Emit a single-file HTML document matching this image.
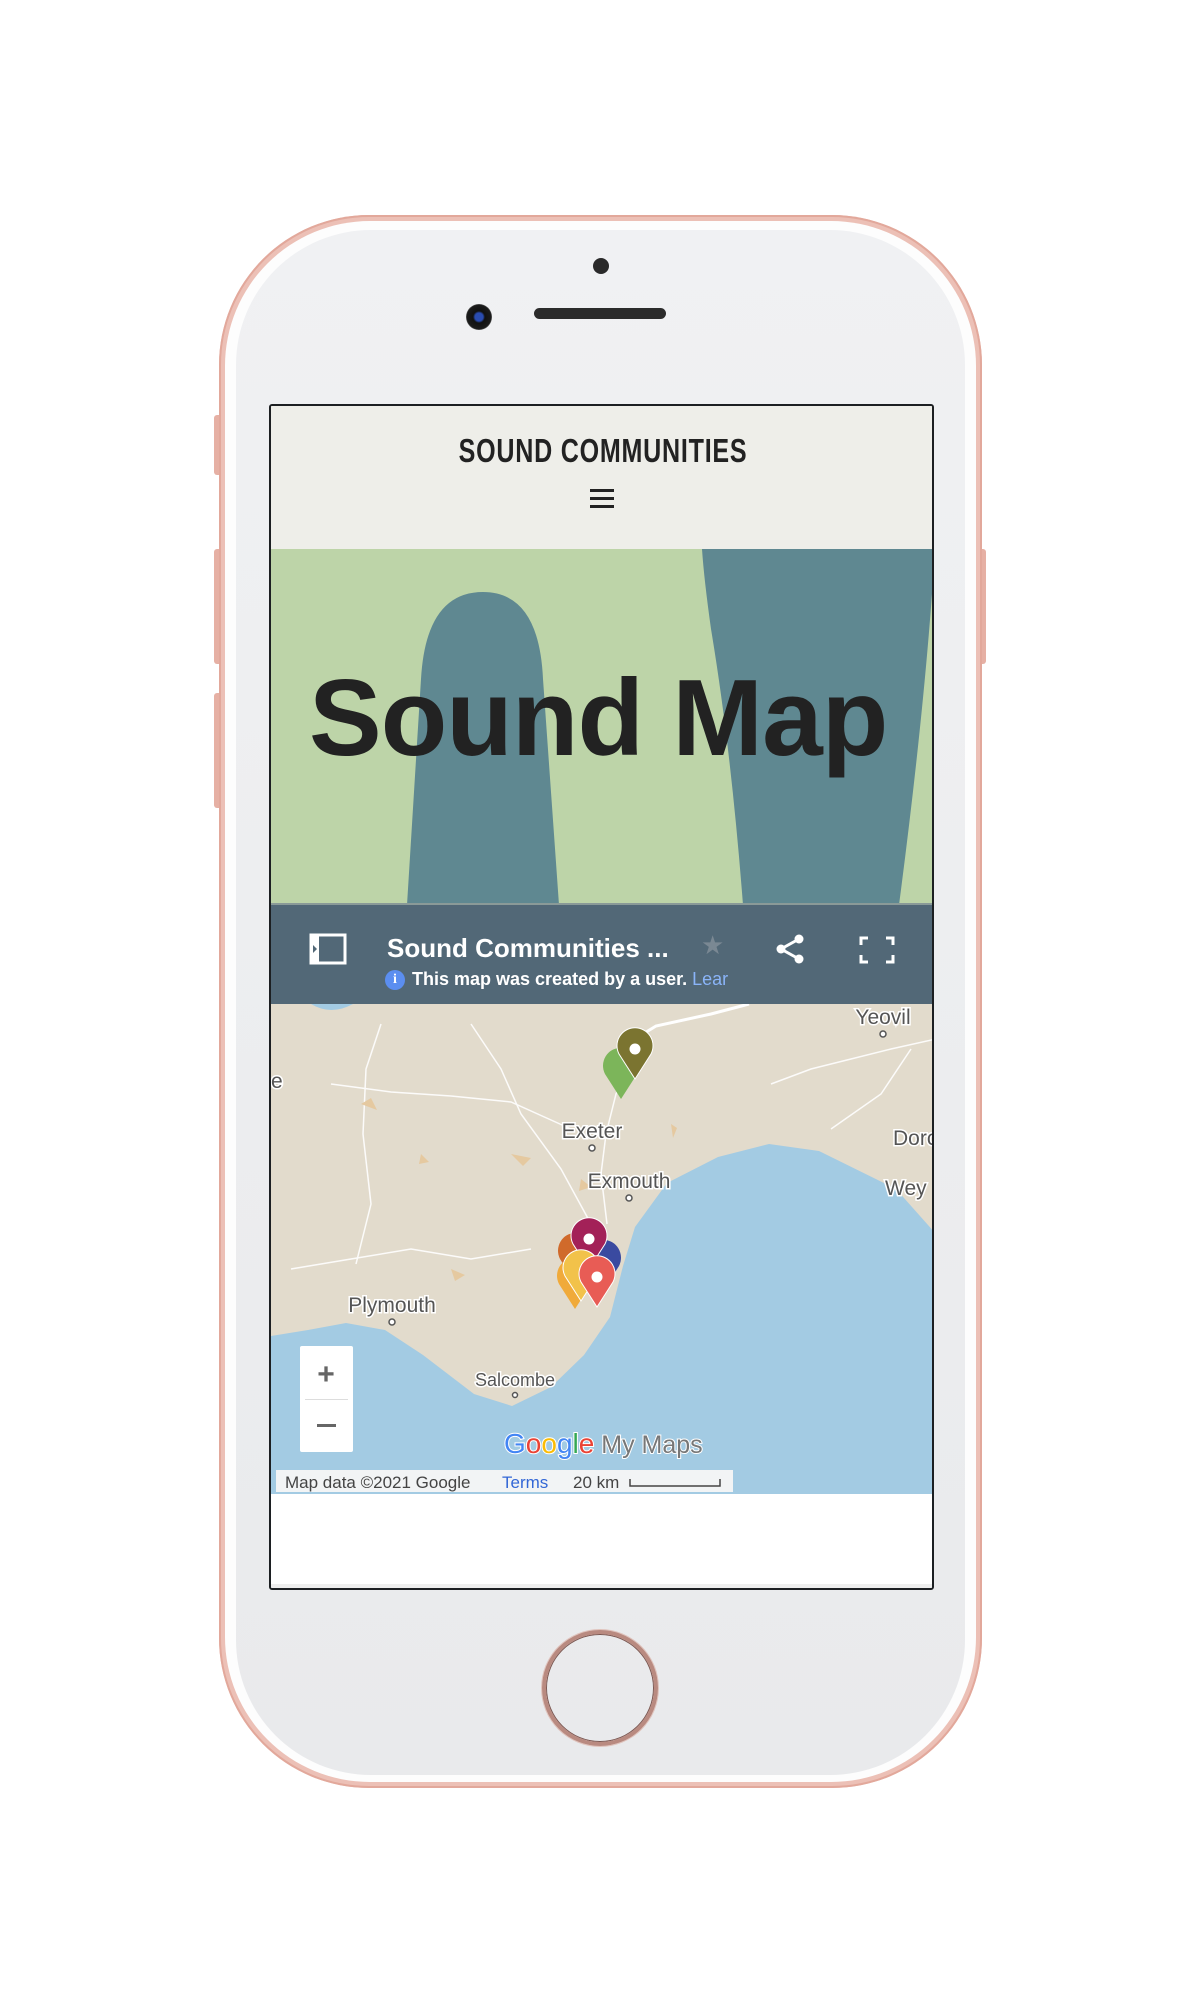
<!DOCTYPE html>
<html><head><meta charset="utf-8"><style>
*{margin:0;padding:0;box-sizing:border-box}
body{width:1200px;height:2000px;background:#fff;position:relative;overflow:hidden;font-family:"Liberation Sans",sans-serif}
.abs{position:absolute}
.phone{left:219px;top:215px;width:763px;height:1573px;border-radius:150px;background:#ecc0b6;box-shadow:inset 0 0 0 2px #e2a89b}
.phone2{left:225px;top:221px;width:751px;height:1561px;border-radius:145px;background:#fdfdfd}
.face{left:236px;top:230px;width:729px;height:1545px;border-radius:135px;background:linear-gradient(#f0f1f3,#e9eaec)}
.btn{background:#e6b0a4;border-radius:3px;width:8px}
.screen{left:269px;top:404px;width:665px;height:1186px;border:2px solid #1c1f22;background:#fff;overflow:hidden;border-radius:3px}
</style></head><body>
<div class="abs btn" style="left:214px;top:415px;height:60px"></div>
<div class="abs btn" style="left:214px;top:549px;height:115px"></div>
<div class="abs btn" style="left:214px;top:693px;height:115px"></div>
<div class="abs btn" style="left:978px;top:549px;height:115px"></div>
<div class="abs phone"></div>
<div class="abs phone2"></div>
<div class="abs face"></div>
<div class="abs" style="left:593px;top:258px;width:16px;height:16px;border-radius:50%;background:#2a2a2a"></div>
<div class="abs" style="left:466px;top:304px;width:26px;height:26px;border-radius:50%;background:radial-gradient(circle at 50% 50%,#2a4cb0 0 4px,#111 6px,#1b1b1b 12px,#666 13px)"></div>
<div class="abs" style="left:534px;top:308px;width:132px;height:11px;border-radius:6px;background:#2b2b2b"></div>
<div class="abs" style="left:542px;top:1630px;width:116px;height:116px;border-radius:50%;border:4px solid #b98a80;box-shadow:inset 0 0 0 1px #7a5650,0 0 0 1px #e0c3bc"></div>

<div class="abs screen">
 <div class="abs" style="left:0;top:0;width:665px;height:143px;background:#eeeee9"></div>
 <div class="abs" style="left:0;top:26px;width:663px;text-align:center;font-weight:bold;font-size:33px;letter-spacing:1px;color:#222"><span style="display:inline-block;transform:scaleX(0.76)">SOUND COMMUNITIES</span></div>
 <div class="abs" style="left:319px;top:83px;width:24px;height:3px;background:#222;box-shadow:0 8px 0 #222,0 16px 0 #222"></div>
 <svg class="abs" style="left:0;top:143px" width="665" height="356" viewBox="0 0 665 356">
  <rect width="665" height="356" fill="#bdd4a8"/>
  <path d="M136 356 L150 130 Q155 43 212 43 Q268 43 272 130 L288 356 Z" fill="#5f8891"/>
  <path d="M431 0 L664 0 Q655 150 628 356 L472 356 Q460 200 440 80 Q433 30 431 0 Z" fill="#5f8891"/>
  <rect y="354" width="665" height="2" fill="#8a9a98"/>
 </svg>
 <div class="abs" style="left:38px;top:258px;font-size:109px;font-weight:bold;color:#222;letter-spacing:-1px;line-height:1">Sound Map</div>
 <div class="abs" style="left:0;top:499px;width:665px;height:99px;background:#526877"></div>
 <svg class="abs" style="left:38px;top:527px" width="38" height="32" viewBox="0 0 38 32"><rect x="2" y="2" width="34" height="28" fill="none" stroke="#fff" stroke-width="3"/><rect x="2" y="2" width="8" height="28" fill="#fff"/><path d="M4 12 L8 16 L4 20Z" fill="#526877"/></svg>
 <div class="abs" style="left:116px;top:527px;color:#fff;font-weight:bold;font-size:26px">Sound Communities ...</div>
 <div class="abs" style="left:430px;top:524px;color:#7a8893;font-size:26px">★</div>
 <svg class="abs" style="left:504px;top:528px" width="30" height="30" viewBox="0 0 30 30"><circle cx="24" cy="5" r="4.5" fill="#fff"/><circle cx="6" cy="15" r="4.5" fill="#fff"/><circle cx="24" cy="25" r="4.5" fill="#fff"/><path d="M24 5 L6 15 L24 25" stroke="#fff" stroke-width="3" fill="none"/></svg>
 <svg class="abs" style="left:588px;top:530px" width="36" height="28" viewBox="0 0 36 28"><path d="M2 9V2H9M27 2H34V9M34 19V26H27M9 26H2V19" stroke="#fff" stroke-width="3" fill="none"/></svg>
 <div class="abs" style="left:114px;top:564px;width:20px;height:20px;border-radius:50%;background:#5b8ef0;color:#fff;font-size:14px;font-weight:bold;text-align:center;line-height:20px;font-family:'Liberation Serif',serif">i</div>
 <div class="abs" style="left:141px;top:563px;color:#fff;font-weight:bold;font-size:18px">This map was created by a user. <span style="color:#8ab4f8;font-weight:normal">Lear</span></div>
 <svg class="abs" style="left:0;top:598px" width="665" height="490" viewBox="0 0 665 490" font-family="Liberation Sans,sans-serif">
  <rect width="665" height="490" fill="#e2dbcc"/>
  <path d="M665 230 L625 185 L548 147 L498 140 L447 153 L396 179 L364 223 L352 262 L339 313 L313 351 L280 383 L241 402 L203 390 L152 351 L114 326 L75 319 L37 326 L0 332 L0 490 L665 490Z" fill="#a3cbe3"/>
  <path d="M40 0 Q60 12 82 0Z" fill="#a3cbe3"/>
  <g stroke="#fff" stroke-width="1.5" fill="none" opacity=".9">
   <path d="M362 55 L345 90 L335 130 L330 170 L336 220"/>
   <path d="M60 80 L120 88 L180 92 L240 98 L300 125"/><path d="M110 20 L95 65 L92 130 L100 200 L85 260"/>
   <path d="M200 20 L230 65 L250 110 L290 165 L320 220"/><path d="M500 80 L540 65 L580 55 L620 45 L665 35"/>
   <path d="M560 125 L610 90 L640 45"/><path d="M20 265 L80 255 L140 245 L200 255 L260 245"/>
  </g>
  <path d="M364 55 L372 30 L385 22 L440 10 L478 0" stroke="#fff" stroke-width="3" fill="none"/>
  <g fill="#e5c9a0"><path d="M90 100l10-6 6 12z"/><path d="M240 150l20 4-8 8z"/><path d="M180 265l14 6-10 6z"/><path d="M150 150l8 8-10 2z"/><path d="M400 120l6 4-4 10z"/><path d="M310 175l10 8-12 4z"/></g>
  <g font-size="21" fill="#555" stroke="#fff" stroke-width="3" paint-order="stroke">
   <text x="612" y="20" text-anchor="middle">Yeovil</text>
   <text x="321" y="134" text-anchor="middle">Exeter</text>
   <text x="358" y="184" text-anchor="middle">Exmouth</text>
   <text x="121" y="308" text-anchor="middle">Plymouth</text>
   <text x="244" y="382" text-anchor="middle" font-size="18">Salcombe</text>
   <text x="622" y="141">Dorc</text>
   <text x="614" y="191">Wey</text>
   <text x="0" y="84">e</text>
  </g>
  <g fill="#fff" stroke="#555" stroke-width="1.5"><circle cx="612" cy="30" r="3"/><circle cx="321" cy="144" r="3"/><circle cx="358" cy="194" r="3"/><circle cx="121" cy="318" r="3"/><circle cx="244" cy="391" r="2.5"/></g>
  <g>
   <path d="M350 95 l-16-25 a18 18 0 1 1 32 0z" fill="#7cb55a"/>
   <path d="M364 75 l-16-25 a18 18 0 1 1 32 0z" fill="#7b7430" stroke="#fff" stroke-width="1"/><circle cx="364" cy="45" r="5.5" fill="#fff"/>
   <path d="M305 280 l-16-25 a18 18 0 1 1 32 0z" fill="#d06a2b"/>
   <path d="M332 287 l-16-25 a18 18 0 1 1 32 0z" fill="#3a4aa0"/>
   <path d="M304 305 l-16-25 a18 18 0 1 1 32 0z" fill="#f0aa3a"/>
   <path d="M318 265 l-16-25 a18 18 0 1 1 32 0z" fill="#a32158" stroke="#fff" stroke-width="1"/><circle cx="318" cy="235" r="5.5" fill="#fff"/>
   <path d="M310 297 l-16-25 a18 18 0 1 1 32 0z" fill="#f2c24a" stroke="#fff" stroke-width="1"/>
   <path d="M326 303 l-16-25 a18 18 0 1 1 32 0z" fill="#e85c55" stroke="#fff" stroke-width="1"/><circle cx="326" cy="273" r="5.5" fill="#fff"/>
  </g>
  <rect x="29" y="342" width="53" height="106" rx="2" fill="#fff"/>
  <rect x="34" y="395" width="43" height="1" fill="#ddd"/>
  <text x="55" y="380" text-anchor="middle" font-size="30" fill="#666" font-weight="bold">+</text>
  <rect x="46" y="420" width="19" height="3" fill="#666"/>
  <g font-size="28" stroke="#fff" stroke-width="2" paint-order="stroke"><text x="233" y="449"><tspan fill="#4285f4">G</tspan><tspan fill="#ea4335">o</tspan><tspan fill="#fbbc05">o</tspan><tspan fill="#4285f4">g</tspan><tspan fill="#34a853">l</tspan><tspan fill="#ea4335">e</tspan><tspan fill="#777" font-size="25"> My Maps</tspan></text></g>
  <rect x="5" y="466" width="457" height="22" fill="#f2f4f5"/>
  <text x="14" y="484" font-size="17" fill="#444">Map data ©2021 Google</text>
  <text x="231" y="484" font-size="17" fill="#3367d6">Terms</text>
  <text x="302" y="484" font-size="17" fill="#444">20 km</text>
  <path d="M359 475 V482 H449 V475" stroke="#444" stroke-width="1.5" fill="none"/>
 </svg>
 <div class="abs" style="left:0;top:1178px;width:665px;height:4px;background:#eee"></div>
</div>
</body></html>
